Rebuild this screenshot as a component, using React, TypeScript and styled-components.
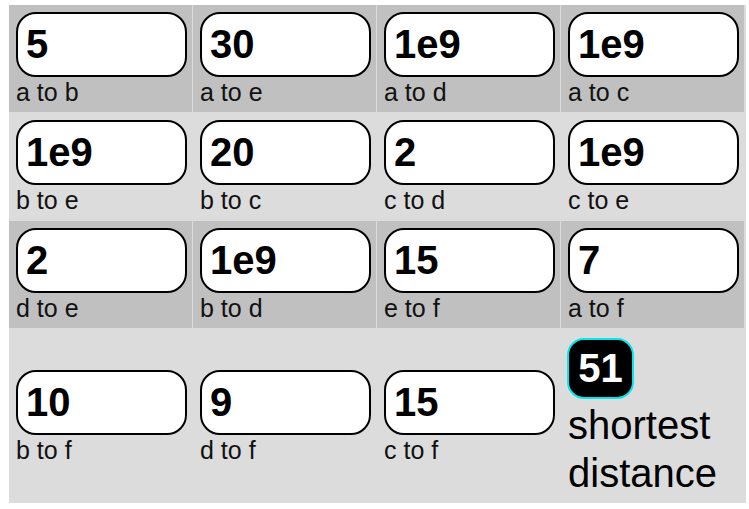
import React from "react";
import styled, { createGlobalStyle } from "styled-components";

const edges: [string, string][] = [
  ["5", "a to b"],
  ["30", "a to e"],
  ["1e9", "a to d"],
  ["1e9", "a to c"],
  ["1e9", "b to e"],
  ["20", "b to c"],
  ["2", "c to d"],
  ["1e9", "c to e"],
  ["2", "d to e"],
  ["1e9", "b to d"],
  ["15", "e to f"],
  ["7", "a to f"],
  ["10", "b to f"],
  ["9", "d to f"],
  ["15", "c to f"],
];

const Global = createGlobalStyle`
  body {
    margin: 5px 0 0 9px;
    font-family: "Liberation Sans", Arial, sans-serif;
    background: #fff;
  }
`;

const Board = styled.div`
  width: max-content;
  display: grid;
  grid-template-columns: repeat(4, 183px);
  gap: 1px;
  padding-right: 2px;
  background: #dcdcdc;
`;

const Cell = styled.div<{ $dark: boolean }>`
  background: ${(p) => (p.$dark ? "#c0c0c0" : "#dcdcdc")};
  padding: 7px 5px 6px 7px;
  display: flex;
  flex-direction: column;
  justify-content: center;
`;

const Field = styled.div`
  width: 171px;
  height: 65px;
  box-sizing: border-box;
  border: 2px solid #000;
  border-radius: 20px;
  background: #fff;
  padding: 0 8px;
  display: flex;
  align-items: center;
  font-size: 40px;
  font-weight: bold;
  color: #000;
`;

const Label = styled.div`
  font-size: 25px;
  line-height: 28px;
  margin-top: 1px;
  color: #111;
`;

const Result = styled.div`
  width: 67px;
  height: 61px;
  box-sizing: border-box;
  border: 2px solid #00e8f0;
  border-radius: 17px;
  background: #000;
  color: #fff;
  font-size: 40px;
  font-weight: bold;
  display: flex;
  align-items: center;
  justify-content: center;
  margin: 2px 0 2px -1px;
`;

const Caption = styled.div`
  font-size: 40px;
  line-height: 48px;
  color: #000;
`;

const ResultCell = styled(Cell)`
  justify-content: flex-start;
`;

export default function App() {
  return (
    <>
      <Global />
      <Board>
        {edges.map(([value, label], i) => (
          <Cell key={i} $dark={Math.floor(i / 4) % 2 === 0}>
            <Field>{value}</Field>
            <Label>{label}</Label>
          </Cell>
        ))}
        <ResultCell $dark={false}>
          <Result>51</Result>
          <Caption>
            shortest
            <br />
            distance
          </Caption>
        </ResultCell>
      </Board>
    </>
  );
}
